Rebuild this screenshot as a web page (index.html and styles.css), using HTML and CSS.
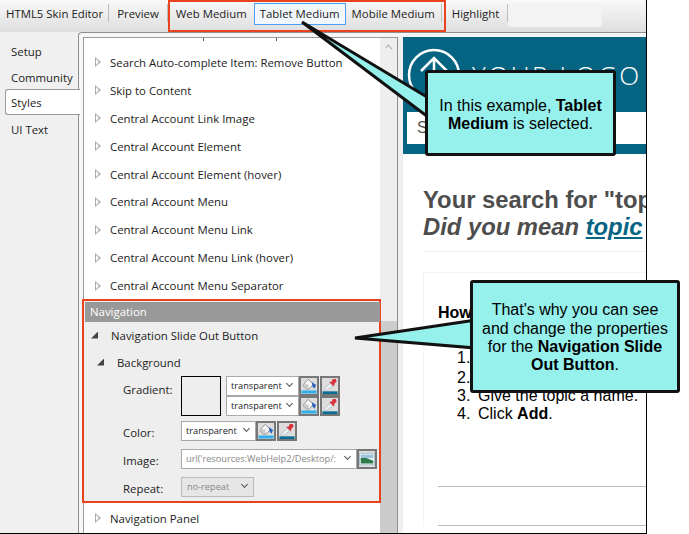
FILE: index.html
```html
<!DOCTYPE html>
<html lang="en">
<head>
    <meta charset="UTF-8">
    <title>HTML5 Skin Editor</title>
    <link rel="stylesheet" href="styles.css">
</head>
<body>
    <svg class="defs" width="0" height="0">
        <symbol id="bucket" viewBox="0 0 18 18">
            <path d="M3 7 L8 1.5 L14 7 L9 12.5 H6 L3 10 Z" fill="#f6f6f6" stroke="#8a8a8a"/>
            <path d="M3 7 L8 7 L9 12.5 H6 L3 10 Z" fill="#c9c9c9"/>
            <path d="M12 4.5 L17 8 L15 12 L13 9.5 Z" fill="#2a62c0"/>
            <rect x="0.5" y="14" width="17" height="3.5" fill="#35aee8"/>
        </symbol>
        <symbol id="dropper" viewBox="0 0 18 18">
            <path d="M2 13 L9 6 L12 9 L5 14 Z" fill="#eef2f5" stroke="#b4c0c9"/>
            <path d="M8 4.5 L11 4 L12 1 L15.5 1 L16.5 4 L14 6.5 L13.5 9.5 Z" fill="#d8333b"/>
            <rect x="0.5" y="15" width="17" height="3" fill="#0b6d94"/>
        </symbol>
        <symbol id="picture" viewBox="0 0 18 18">
            <rect x="0.5" y="2.5" width="17" height="13" fill="#eaf3f6" stroke="#a9bdc8"/>
            <rect x="2" y="4" width="14" height="4" fill="#9cc4da"/>
            <path d="M2 8 L8 8 L16 11 V14 H2 Z" fill="#2f7a4c"/>
        </symbol>
    </svg>

    <div class="window">
        <div class="toolbar">
            <span class="tool tool-first">HTML5 Skin Editor</span>
            <i class="sep"></i>
            <span class="tool">Preview</span>
            <i class="sep"></i>
            <div class="media-group">
                <span class="tool">Web Medium</span>
                <span class="tool tool-on">Tablet Medium</span>
                <span class="tool">Mobile Medium</span>
                <i class="sep"></i>
            </div>
            <span class="tool tool-highlight">Highlight</span>
            <i class="sep"></i>
            <div class="tool-blank"></div>
        </div>

        <div class="main">
            <div class="sidebar">
                <div class="tab">Setup</div>
                <div class="tab">Community</div>
                <div class="tab tab-on">Styles</div>
                <div class="tab">UI Text</div>
            </div>

            <div class="panel">
                <div class="list">
                    <div class="list-top"><i></i><i></i></div>
                    <div class="row"><i class="tri"></i>Search Auto-complete Item: Remove Button</div>
                    <div class="row"><i class="tri"></i>Skip to Content</div>
                    <div class="row"><i class="tri"></i>Central Account Link Image</div>
                    <div class="row"><i class="tri"></i>Central Account Element</div>
                    <div class="row"><i class="tri"></i>Central Account Element (hover)</div>
                    <div class="row"><i class="tri"></i>Central Account Menu</div>
                    <div class="row"><i class="tri"></i>Central Account Menu Link</div>
                    <div class="row"><i class="tri"></i>Central Account Menu Link (hover)</div>
                    <div class="row"><i class="tri"></i>Central Account Menu Separator</div>

                    <div class="nav-box">
                        <div class="nav-head">Navigation</div>
                        <div class="nav-row"><i class="tri-open"></i>Navigation Slide Out Button</div>
                        <div class="nav-sub"><i class="tri-open"></i>Background</div>
                        <div class="prop prop-gradient">
                            <span class="prop-name">Gradient:</span>
                            <div class="swatch"></div>
                            <div class="stops">
                                <div class="controls">
                                    <div class="pick pick-stop">transparent</div>
                                    <span class="icon-btn"><svg><use href="#bucket"/></svg></span>
                                    <span class="icon-btn"><svg><use href="#dropper"/></svg></span>
                                </div>
                                <div class="controls">
                                    <div class="pick pick-stop">transparent</div>
                                    <span class="icon-btn"><svg><use href="#bucket"/></svg></span>
                                    <span class="icon-btn"><svg><use href="#dropper"/></svg></span>
                                </div>
                            </div>
                        </div>
                        <div class="prop">
                            <span class="prop-name">Color:</span>
                            <div class="controls">
                                <div class="pick pick-color">transparent</div>
                                <span class="icon-btn"><svg><use href="#bucket"/></svg></span>
                                <span class="icon-btn"><svg><use href="#dropper"/></svg></span>
                            </div>
                        </div>
                        <div class="prop">
                            <span class="prop-name">Image:</span>
                            <div class="controls">
                                <div class="pick pick-image"><span class="pick-clip">url('resources:WebHelp2/Desktop/:</span></div>
                                <span class="icon-btn"><svg><use href="#picture"/></svg></span>
                            </div>
                        </div>
                        <div class="prop">
                            <span class="prop-name">Repeat:</span>
                            <div class="pick pick-off">no-repeat</div>
                        </div>
                    </div>

                    <div class="row row-last"><i class="tri"></i>Navigation Panel</div>
                </div>

                <div class="scrollbar">
                    <i class="scroll-up"></i>
                    <div class="scroll-thumb"></div>
                </div>

                <div class="preview">
                    <div class="site-head">
                        <div class="logo">
                            <svg width="54" height="54" viewBox="0 0 54 54">
                                <circle cx="27" cy="27" r="25" fill="none" stroke="#fff" stroke-width="2.5"/>
                                <path d="M27 50 V10 M14 23 L27 10 L40 23" fill="none" stroke="#fff" stroke-width="2.5"/>
                            </svg>
                            <span class="logo-text">YOUR LOGO</span>
                        </div>
                        <div class="site-search">Search</div>
                    </div>
                    <div class="site-body">
                        <h1>Your search for "top<br><em>Did you mean <a href="#">topic</a></em></h1>
                        <div class="result">
                            <h2>How to Add a Topic</h2>
                            <ol>
                                <li>Open the project.</li>
                                <li>Select New Topic.</li>
                                <li>Give the topic a name.</li>
                                <li><span>Click <b>Add</b>.</span></li>
                            </ol>
                            <hr>
                            <hr>
                        </div>
                    </div>
                </div>
            </div>
        </div>

        <!-- callouts sit over everything else -->
        <svg class="pointers" width="647" height="534">
            <path d="M302 22 L432 100 V120 Z"/>
            <path d="M355 338 L476 320 V348 Z"/>
        </svg>
        <div class="callout callout-tablet"><p>In this example, <b>Tablet Medium</b> is selected.</p></div>
        <div class="callout callout-nav"><p>That's why you can see and change the properties for the <b>Navigation Slide Out Button</b>.</p></div>
    </div>
</body>
</html>
```

FILE: styles.css
```css
html, body {
    margin: 0;
    padding: 0;
    height: 100%;
    overflow: hidden;
    background-color: #fff;
}

body {
    font-family: "Open Sans", sans-serif;
    font-size: 11.4px;
    color: #222;
}

.defs {
    position: absolute;
}

.window {
    position: relative;
    box-sizing: border-box;
    width: 647px;
    height: 534px;
    border-right: 1px solid #000;
    border-bottom: 1px solid #000;
    display: flex;
    flex-direction: column;
    background-color: #f0f0f0;
}

/* Toolbar */
.toolbar {
    flex: none;
    height: 32px;
    display: flex;
    align-items: flex-start;
    background: linear-gradient(#f9f9f9, #dedede);
}

.tool {
    height: 20px;
    line-height: 20px;
    margin-top: 4px;
    padding: 0 8px;
    white-space: nowrap;
}

.tool-first {
    padding-left: 6px;
    padding-right: 5px;
}

.tool-highlight {
    padding-left: 6px;
}

.sep {
    flex: none;
    width: 1px;
    height: 18px;
    margin-top: 4px;
    background-color: #bcbcbc;
}

.media-group {
    box-sizing: border-box;
    flex: none;
    width: 278px;
    height: 32px;
    display: flex;
    align-items: flex-start;
    border: 2px solid #e8431c;
}

.media-group .tool {
    margin-top: 2px;
    padding: 0 6px;
}

.media-group .tool-on {
    margin: 1px 0 0 1px;
    padding: 0 5px;
    border: 1px solid #4a9ff5;
    background-color: #f2f7fc;
}

.media-group .sep {
    margin: 2px 2px 0 auto;
}

.tool-blank {
    width: 94px;
    height: 24px;
    margin-top: 3px;
    border-radius: 2px;
    background-color: #f3f3f3;
}

/* Main area */
.main {
    flex: 1;
    display: flex;
    min-height: 0;
}

.sidebar {
    flex: none;
    width: 78px;
    padding-top: 7px;
}

.tab {
    height: 26px;
    line-height: 26px;
    padding-left: 11px;
}

.tab-on {
    box-sizing: border-box;
    position: relative;
    z-index: 1;
    width: 75px;
    margin: -2px 0 2px 5px;
    padding-left: 5px;
    background-color: #fff;
    border: 1px solid #9a9a9a;
    border-right: none;
    border-radius: 3px 0 0 3px;
}

.panel {
    flex: 1;
    display: flex;
    min-width: 0;
    padding: 4px 0 0 4px;
    background-color: #f6f6f6;
    border-top: 1px solid #8f8f8f;
    border-left: 1px solid #8f8f8f;
    border-top-left-radius: 4px;
}

.list {
    flex: none;
    width: 296px;
    background-color: #fff;
    border-top: 1px solid #9a9a9a;
    border-left: 1px solid #9a9a9a;
}

.list-top {
    height: 10px;
    display: flex;
    padding-left: 119px;
    gap: 72px;
}

.list-top i {
    width: 1px;
    height: 3px;
    background-color: #555;
}

.row {
    box-sizing: border-box;
    height: 27.9px;
    padding: 1px 0 0 11px;
    display: flex;
    align-items: center;
    white-space: nowrap;
}

.row-last {
    margin-top: 1px;
}

.tri {
    position: relative;
    flex: none;
    width: 0;
    height: 0;
    margin-right: 9px;
    border-left: 6px solid #a8a8a8;
    border-top: 5px solid transparent;
    border-bottom: 5px solid transparent;
}

.tri::after {
    content: "";
    position: absolute;
    left: -5px;
    top: -3px;
    border-left: 3px solid #fff;
    border-top: 3px solid transparent;
    border-bottom: 3px solid transparent;
}

.tri-open {
    flex: none;
    width: 7px;
    height: 7px;
    background-color: #444;
    clip-path: polygon(100% 0, 100% 100%, 0 100%);
}

/* Navigation section */
.nav-box {
    position: relative;
    box-sizing: border-box;
    width: 299px;
    height: 204px;
    margin-left: -2px;
    padding: 1px 0 0 1px;
    border: 2px solid #e8431c;
    background-color: #eee;
}

.nav-head {
    height: 20px;
    line-height: 20px;
    padding-left: 5px;
    margin-right: -1px;
    color: #fff;
    background-color: #999;
}

.nav-row {
    box-sizing: border-box;
    height: 28px;
    padding: 0 0 2px 6px;
    display: flex;
    align-items: center;
    gap: 13px;
}

.nav-sub {
    box-sizing: border-box;
    height: 26px;
    padding: 0 0 2px 12px;
    display: flex;
    align-items: center;
    gap: 13px;
}

.prop {
    height: 20px;
    display: flex;
    align-items: flex-start;
    margin-bottom: 8px;
}

.prop-gradient {
    height: 40px;
    margin-bottom: 5px;
}

.prop-name {
    flex: none;
    width: 58px;
    margin-left: 38px;
    padding-top: 2px;
    line-height: 20px;
}

.prop-gradient .prop-name {
    padding-top: 4px;
}

.swatch {
    box-sizing: border-box;
    flex: none;
    width: 40px;
    height: 40px;
    margin-right: 5px;
    border: 1px solid #000;
    background-color: #eee;
}

.controls {
    display: flex;
}

.pick {
    position: relative;
    box-sizing: border-box;
    height: 20px;
    line-height: 18px;
    padding-left: 4px;
    font-size: 9.2px;
    color: #222;
    background-color: #fff;
    border: 1px solid #a9a9a9;
}

.pick::after {
    content: "";
    position: absolute;
    right: 6px;
    top: 4px;
    width: 4px;
    height: 4px;
    border-right: 1px solid #555;
    border-bottom: 1px solid #555;
    transform: rotate(45deg);
}

.pick-stop {
    width: 73px;
}

.pick-color {
    width: 75px;
}

.pick-image {
    width: 176px;
    color: #888;
}

.pick-clip {
    display: block;
    width: 153px;
    overflow: hidden;
    white-space: nowrap;
}

.pick-off {
    width: 73px;
    padding-left: 5px;
    color: #888;
    background-color: #e6e6e6;
    border-color: #bbb;
}

.icon-btn {
    box-sizing: border-box;
    flex: none;
    width: 20px;
    height: 20px;
    margin-right: 1px;
    border: 2px solid #777;
    background-color: #ddd;
}

.icon-btn svg {
    display: block;
    width: 16px;
    height: 16px;
}

/* Scrollbar */
.scrollbar {
    flex: none;
    width: 17px;
    display: flex;
    flex-direction: column;
    background-color: #eee;
    border-top: 1px solid #9a9a9a;
    border-right: 1px solid #8f8f8f;
}

.scroll-up {
    width: 5px;
    height: 5px;
    margin: 8px 0 0 6px;
    border-top: 1px solid #aaa;
    border-left: 1px solid #aaa;
    transform: rotate(45deg);
}

.scroll-thumb {
    flex: none;
    height: 212px;
    margin-top: 271px;
    background-color: #ccc;
}

/* Preview pane */
.preview {
    flex: 1;
    min-width: 0;
    background-color: #fff;
    border-left: 5px solid #f0f0f2;
    overflow: hidden;
    font-family: "Liberation Sans", Arial, sans-serif;
}

.site-head {
    box-sizing: border-box;
    height: 117px;
    padding-left: 4px;
    background-color: #066483;
}

.logo {
    height: 75px;
    display: flex;
    align-items: center;
    gap: 11px;
}

.logo-text {
    font-family: "Open Sans", sans-serif;
    font-weight: 300;
    font-size: 26px;
    letter-spacing: 2.6px;
    color: #fff;
    white-space: nowrap;
}

.site-search {
    height: 32px;
    line-height: 32px;
    padding-left: 10px;
    font-size: 16px;
    color: #555;
    background-color: #fff;
}

.site-body {
    padding: 32px 0 0 20px;
}

.site-body h1 {
    margin: 0;
    padding-bottom: 11px;
    border-bottom: 1px solid #f0f0f0;
    font-size: 23.8px;
    line-height: 27px;
    font-weight: bold;
    color: #4d4d4d;
    white-space: nowrap;
}

.site-body a {
    color: #066483;
}

.result {
    margin-top: 20px;
    padding: 31px 0 0 14px;
    border-left: 1px solid #f4f4f4;
    border-top: 1px solid #f4f4f4;
    font-size: 16px;
    color: #000;
}

.result h2 {
    margin: 0 0 27px;
    font-size: 16px;
    line-height: 18px;
    white-space: nowrap;
}

.result ol {
    margin: 0;
    padding-left: 19px;
    line-height: 18px;
    white-space: nowrap;
    list-style: none;
    counter-reset: step;
}

.result li {
    display: flex;
    counter-increment: step;
}

.result li::before {
    content: counter(step) ".";
    flex: none;
    width: 21px;
}

.result li:first-child {
    margin-bottom: 2px;
}

.result hr {
    margin: 63px 0 0;
    border: none;
    border-top: 1px solid #bbb;
}

.result hr + hr {
    margin-top: 38px;
}

/* Callouts */
.pointers {
    position: absolute;
    left: 0;
    top: 0;
}

.pointers path {
    fill: #96f0ec;
    stroke: #111;
    stroke-width: 3;
}

.callout {
    position: absolute;
    box-sizing: border-box;
    display: flex;
    align-items: center;
    text-align: center;
    padding: 0 6px;
    font-family: "Liberation Sans", Arial, sans-serif;
    font-size: 16px;
    line-height: 18.4px;
    color: #000;
    background-color: #96f0ec;
    border: 3px solid #111;
    border-radius: 3px;
}

.callout p {
    margin: 0;
    width: 100%;
}

.callout-tablet {
    left: 425px;
    top: 70px;
    width: 191px;
    height: 86px;
    padding-top: 4px;
}

.callout-nav {
    left: 470px;
    top: 280px;
    width: 210px;
    height: 113px;
    padding-top: 3px;
}
```
